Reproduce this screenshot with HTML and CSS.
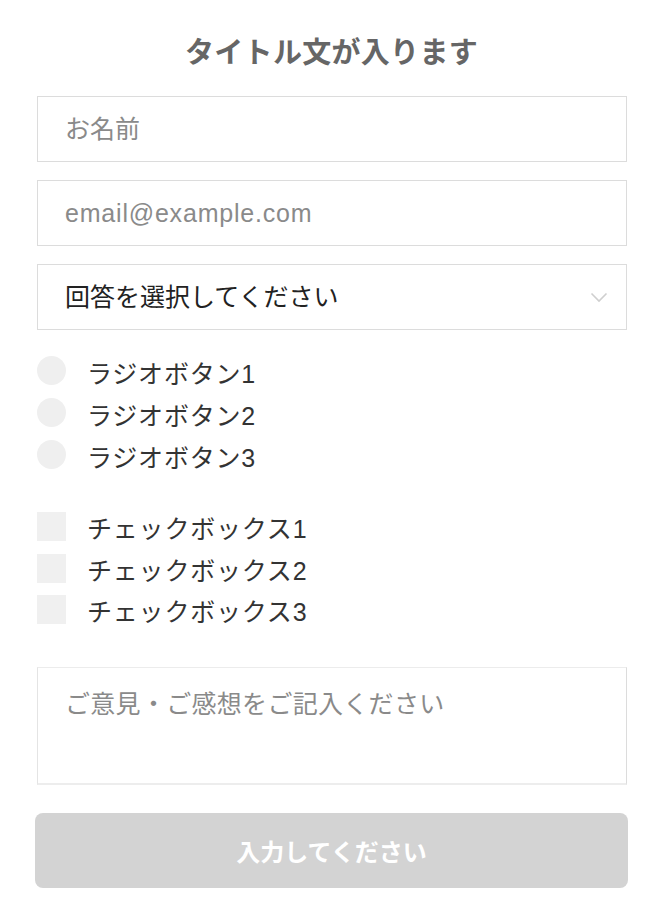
FILE: index.html
```html
<!DOCTYPE html>
<html lang="ja">
<head>
<meta charset="utf-8">
<title>フォーム</title>
<link rel="stylesheet" href="styles.css">
</head>
<body>
<form class="form">
  <h1 class="title">タイトル文が入ります</h1>
  <input class="field" type="text" placeholder="お名前">
  <input class="field field-email" type="email" placeholder="email@example.com">
  <div class="field select-wrap">
    <select class="select">
      <option>回答を選択してください</option>
    </select>
    <svg class="chevron" width="18" height="11" viewBox="0 0 18 11"><polyline points="1.5,1.5 9,9 16.5,1.5" fill="none" stroke="#cfcfcf" stroke-width="1.6"/></svg>
  </div>
  <div class="group radios">
    <label class="row"><input class="radio" type="radio" name="r"><span class="label label-radio">ラジオボタン1</span></label>
    <label class="row"><input class="radio" type="radio" name="r"><span class="label label-radio">ラジオボタン2</span></label>
    <label class="row"><input class="radio" type="radio" name="r"><span class="label label-radio">ラジオボタン3</span></label>
  </div>
  <div class="group checks">
    <label class="row"><input class="check" type="checkbox"><span class="label label-check">チェックボックス1</span></label>
    <label class="row"><input class="check" type="checkbox"><span class="label label-check">チェックボックス2</span></label>
    <label class="row"><input class="check" type="checkbox"><span class="label label-check">チェックボックス3</span></label>
  </div>
  <textarea class="textarea" placeholder="ご意見・ご感想をご記入ください"></textarea>
  <button class="submit" type="button" disabled>入力してください</button>
</form>
</body>
</html>
```
FILE: styles.css
```css
html, body {
  margin: 0;
  padding: 0;
  background: #fff;
}
body {
  font-family: "Liberation Sans", "Noto Sans CJK JP", sans-serif;
  color: #333;
}
.form {
  width: 593px;
  margin-left: 35px;
  display: flex;
  flex-direction: column;
}
.title {
  margin: 0;
  padding-top: 33px;
  line-height: 40px;
  font-size: 29px;
  font-weight: bold;
  letter-spacing: 0.3px;
  color: #666;
  text-align: center;
}
.field {
  box-sizing: border-box;
  height: 66px;
  margin: 0 1px 18px 2px;
  border: 1px solid #dcdcdc;
  padding: 0 27px;
  font-family: inherit;
  font-size: 25px;
  color: #222;
  background: #fff;
  outline: none;
}
.title + .field {
  margin-top: 23px;
}
.field::placeholder {
  color: #8a8a8a;
}
.field-email {
  letter-spacing: 0.8px;
}
.select-wrap {
  display: flex;
  align-items: center;
  padding: 0 18px 0 0;
  margin-bottom: 0;
}
.select {
  flex: 1;
  height: 100%;
  -webkit-appearance: none;
  appearance: none;
  border: none;
  background: transparent;
  padding: 0 0 0 27px;
  font-family: inherit;
  font-size: 25px;
  color: #222;
  outline: none;
}
.chevron {
  display: block;
  flex: none;
}
.group {
  display: flex;
  flex-direction: column;
  margin-left: 2px;
}
.radios {
  margin-top: 26px;
  gap: 13px;
}
.checks {
  margin-top: 43px;
  gap: 12.5px;
}
.row {
  display: flex;
  align-items: flex-start;
  height: 29px;
  gap: 21px;
}
.radio, .check {
  -webkit-appearance: none;
  appearance: none;
  margin: 0;
  width: 29px;
  height: 29px;
  flex: none;
  border: none;
}
.radio {
  border-radius: 50%;
  background: #efefef;
}
.check {
  background: #f0f0f0;
}
.label {
  font-size: 25px;
  color: #333;
  letter-spacing: 0.8px;
  white-space: nowrap;
}
.label-radio {
  line-height: 37px;
}
.label-check {
  line-height: 34px;
}
.textarea {
  box-sizing: border-box;
  height: 118px;
  margin: 43px 1px 0 2px;
  border: 1px solid;
  border-color: #ececec #dcdcdc #ededed #e4e4e4;
  border-bottom-width: 2px;
  padding: 18px 27px;
  font-family: inherit;
  font-size: 25px;
  line-height: 1.5;
  letter-spacing: 0.3px;
  resize: none;
  outline: none;
}
.textarea::placeholder {
  color: #8a8a8a;
}
.submit {
  margin-top: 28px;
  height: 75px;
  border: none;
  border-radius: 8px;
  background: #d3d3d3;
  color: #fff;
  font-family: inherit;
  font-size: 24px;
  font-weight: bold;
}
```
